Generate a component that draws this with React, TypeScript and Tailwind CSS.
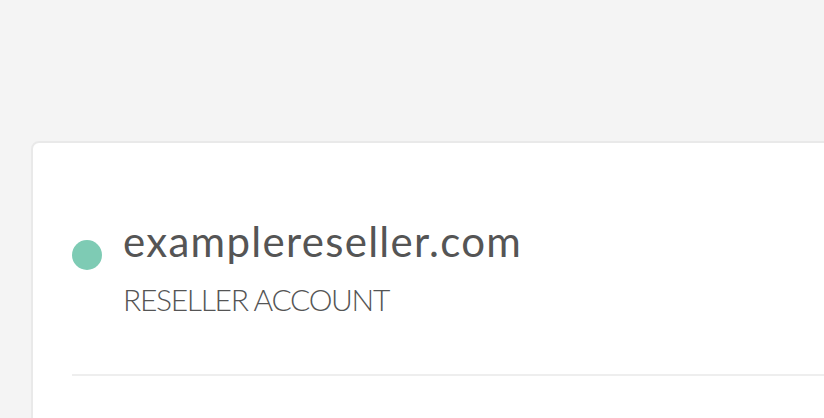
export default function App() {
  return (
    <div className="h-[418px] w-[824px] overflow-hidden bg-[#f4f4f4] pl-[31px] pt-[141px]" style={{ fontFamily: 'Lato, "Open Sans", sans-serif' }}>
      <div className="w-[860px] h-[320px] rounded-lg border-2 border-[#e9e9e9] bg-white pl-[39px] pt-[77px]">
        <div className="flex items-start gap-[21px]">
          <div className="mt-[20px] h-[30px] w-[30px] shrink-0 rounded-full bg-[#7ecbb4]" />
          <div className="flex flex-col">
            <h1 className="text-[42px] leading-[42px] font-normal tracking-[1.3px] text-[#555555]">examplereseller.com</h1>
            <p className="mt-[22px] text-[30px] leading-[30px] font-light uppercase tracking-[-1.3px] text-[#555555]">Reseller Account</p>
          </div>
        </div>
        <div className="mt-[60px] h-[2px] bg-[#eeeeee]" />
      </div>
    </div>
  );
}
